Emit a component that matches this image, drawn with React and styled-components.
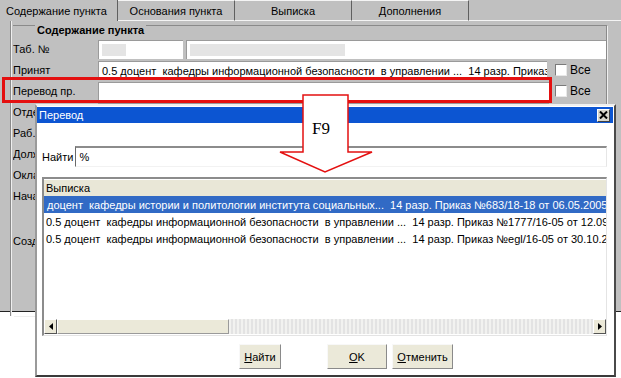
import styled, { createGlobalStyle } from "styled-components";

const GlobalStyle = createGlobalStyle`
  body {
    margin: 0;
    background: #fff;
    font-family: "Liberation Sans", Arial, sans-serif;
    font-size: 11px;
    color: #000;
  }
`;

const Screen = styled.div`
  position: relative;
  width: 621px;
  height: 378px;
  overflow: hidden;
  background: #fff;
`;

const MainWindow = styled.div`
  height: 311px;
  background: #c0c0c0;
  border-bottom: 1px solid #222;
  display: flex;
  flex-direction: column;
`;

const TabBar = styled.div`
  display: flex;
  height: 21px;
  flex-shrink: 0;
`;

const Tab = styled.div`
  width: ${(p) => (p.$active ? "118px" : "117px")};
  height: 21px;
  box-sizing: border-box;
  display: flex;
  align-items: center;
  justify-content: ${(p) => (p.$active ? "flex-start" : "center")};
  padding-left: ${(p) => (p.$active ? "6px" : "0")};
  border-top: ${(p) => (p.$active ? "none" : "1px solid #f4f4f4")};
  border-right: 1px solid #606060;
  border-bottom: ${(p) => (p.$active ? "none" : "1px solid #f4f4f4")};
  white-space: nowrap;
`;

const TabRest = styled.div`
  flex: 1;
  border-bottom: 1px solid #f4f4f4;
`;

const Panel = styled.div`
  flex: 1;
  margin-left: 10px;
  border-left: 1px solid #8a8a8a;
  box-shadow: inset 1px 0 0 #efefef;
  padding: 4px 14px 0 2px;
`;

const GroupBox = styled.div`
  border-top: 1px solid #8a8a8a;
  border-right: 1px solid #8a8a8a;
  box-shadow: 1px 1px 0 #efefef;
  height: 290px;
`;

const GroupTitle = styled.div`
  margin: -2px 0 0 22px;
  padding: 0 2px;
  width: max-content;
  background: #c0c0c0;
  font-weight: bold;
  line-height: 13px;
`;

const FieldList = styled.div`
  display: flex;
  flex-direction: column;
  gap: 1px;
  margin-top: 2px;
`;

const Row = styled.div`
  display: flex;
  align-items: center;
  height: ${(p) => p.$h || 20}px;
  margin-top: ${(p) => p.$gap || 0}px;
`;

const Label = styled.div`
  width: 85px;
  flex-shrink: 0;
  white-space: nowrap;
  overflow: hidden;
`;

const Field = styled.div`
  width: ${(p) => p.$w}px;
  height: 19px;
  box-sizing: border-box;
  margin-left: ${(p) => p.$ml || 0}px;
  background: #fff;
  border-top: 1px solid #9a9a9a;
  border-left: 1px solid #9a9a9a;
  display: flex;
  align-items: center;
  padding-left: 3px;
  white-space: pre;
  overflow: hidden;
`;

const Blur = styled.div`
  width: ${(p) => p.$w}px;
  height: 12px;
  background: #e4e4e4;
`;

const Check = styled.div`
  width: 12px;
  height: 12px;
  margin-left: ${(p) => p.$ml || 8}px;
  box-sizing: border-box;
  background: #fff;
  border-top: 1px solid #7a7a7a;
  border-left: 1px solid #7a7a7a;
  border-right: 1px solid #e8e8e8;
  border-bottom: 1px solid #e8e8e8;
`;

const CheckText = styled.span`
  margin-left: 3px;
  font-size: 12px;
`;

const Highlight = styled.div`
  position: absolute;
  left: 2px;
  top: 77px;
  width: 550px;
  height: 26px;
  box-sizing: border-box;
  border: 3px solid #e41010;
`;

const Dialog = styled.div`
  position: absolute;
  left: 35px;
  top: 104px;
  width: 581px;
  height: 273px;
  box-sizing: border-box;
  background: #fff;
  border-top: 2px solid #f0f0f0;
  border-left: 2px solid #9a9a9a;
  border-right: 2px solid #4a4a4a;
  border-bottom: 2px solid #3a3a3a;
  display: flex;
  flex-direction: column;
`;

const TitleBar = styled.div`
  height: 16px;
  margin: 1px 1px 0 0;
  background: #0c55d2;
  color: #fff;
  display: flex;
  align-items: center;
  justify-content: space-between;
  padding-left: 2px;
`;

const CloseButton = styled.div`
  width: 13px;
  height: 13px;
  margin-right: 3px;
  box-sizing: border-box;
  background: #d8d6cc;
  border: 1px solid;
  border-color: #fff #404040 #404040 #fff;
  display: flex;
  align-items: center;
  justify-content: center;
`;

const SearchRow = styled.div`
  display: flex;
  align-items: center;
  margin: 23px 0 0 5px;
  height: 21px;
`;

const SearchInput = styled.div`
  width: 532px;
  height: 21px;
  box-sizing: border-box;
  margin-left: 2px;
  border-top: 2px solid #8c8c8c;
  border-left: 1px solid #6a6a6a;
  border-right: 1px solid #e6e6e6;
  border-bottom: 1px solid #f2f2f2;
  display: flex;
  align-items: center;
  padding-left: 3px;
`;

const ListBox = styled.div`
  margin: 10px 0 0 5px;
  width: 565px;
  height: 159px;
  box-sizing: border-box;
  border-top: 2px solid #8c8c8c;
  border-left: 2px solid #8c8c8c;
  border-right: 1px solid #e4e4e4;
  border-bottom: 1px solid #e4e4e4;
  display: flex;
  flex-direction: column;
  overflow: hidden;
`;

const ListHeader = styled.div`
  height: 16px;
  margin-top: 1px;
  background: #e9e7d7;
  padding-left: 2px;
  display: flex;
  align-items: center;
`;

const ListRows = styled.div`
  flex: 1;
`;

const ListRow = styled.div`
  height: 17px;
  display: flex;
  align-items: center;
  padding-left: ${(p) => (p.$selected ? 3 : 2)}px;
  background: ${(p) => (p.$selected ? "#316ac5" : "transparent")};
  color: ${(p) => (p.$selected ? "#fff" : "#000")};
  white-space: pre;
  overflow: hidden;
`;

const ScrollBar = styled.div`
  height: 15px;
  display: flex;
  align-items: stretch;
  margin-bottom: 1px;
`;

const ScrollButton = styled.div`
  width: 13px;
  box-sizing: border-box;
  background: #ece9d8;
  border: 1px solid;
  border-color: #fff #555 #555 #fff;
  display: flex;
  align-items: center;
  justify-content: center;
`;

const ScrollThumb = styled.div`
  width: 172px;
  box-sizing: border-box;
  background: #ebe9d9;
  border: 1px solid;
  border-color: #fff #9a9a9a #9a9a9a #fff;
`;

const ScrollTrack = styled.div`
  flex: 1;
  background: repeating-linear-gradient(90deg, #f2f2f0 0 2px, #e3e3e3 2px 4px);
`;

const ButtonRow = styled.div`
  display: flex;
  margin: 8px 0 0 202px;
`;

const Button = styled.div`
  width: ${(p) => p.$w}px;
  height: 25px;
  margin-left: ${(p) => p.$ml || 0}px;
  box-sizing: border-box;
  background: #ebe9d9;
  border: 1px solid;
  border-color: #f8f8f8 #8a8a8a #8a8a8a #f8f8f8;
  display: flex;
  align-items: center;
  justify-content: center;
  u {
    text-decoration: underline;
  }
`;

const Overlay = styled.svg`
  position: absolute;
  left: 0;
  top: 0;
  pointer-events: none;
`;

const lowerLabels = ["Отдел", "Раб. место", "Должность", "Оклад", "Начало"];

export default function App() {
  return (
    <>
      <GlobalStyle />
      <Screen>
        <MainWindow>
          <TabBar>
            <Tab $active>Содержание пункта</Tab>
            <Tab>Основания пункта</Tab>
            <Tab>Выписка</Tab>
            <Tab>Дополнения</Tab>
            <TabRest />
          </TabBar>
          <Panel>
            <GroupBox>
              <GroupTitle>Содержание пункта</GroupTitle>
              <FieldList>
                <Row>
                  <Label>Таб. №</Label>
                  <Field $w={85}>
                    <Blur $w={24} />
                  </Field>
                  <Field $w={420} $ml={3}>
                    <Blur $w={155} />
                  </Field>
                </Row>
                <Row>
                  <Label>Принят</Label>
                  <Field $w={449}>
                    0.5 доцент  кафедры информационной безопасности  в управлении ...  14 разр. Приказ №1777/16-05 от 12.09.2005
                  </Field>
                  <Check />
                  <CheckText>Все</CheckText>
                </Row>
                <Row>
                  <Label>Перевод пр.</Label>
                  <Field $w={451} />
                  <Check $ml={6} />
                  <CheckText>Все</CheckText>
                </Row>
                {lowerLabels.map((l) => (
                  <Row key={l}>
                    <Label>{l}</Label>
                    <Field $w={451} />
                  </Row>
                ))}
                <Row $gap={24}>
                  <Label>Создан</Label>
                  <Field $w={451} />
                </Row>
              </FieldList>
            </GroupBox>
          </Panel>
        </MainWindow>

        <Highlight />

        <Dialog>
          <TitleBar>
            <span>Перевод</span>
            <CloseButton>
              <svg width="9" height="8" viewBox="0 0 9 8">
                <path d="M1 0.5 L8 7.5 M8 0.5 L1 7.5" stroke="#000" strokeWidth="2" />
              </svg>
            </CloseButton>
          </TitleBar>
          <SearchRow>
            <span>Найти</span>
            <SearchInput>%</SearchInput>
          </SearchRow>
          <ListBox>
            <ListHeader>Выписка</ListHeader>
            <ListRows>
              <ListRow $selected>
                доцент  кафедры истории и политологии института социальных...  14 разр. Приказ №683/18-18 от 06.05.2005
              </ListRow>
              <ListRow>
                0.5 доцент  кафедры информационной безопасности  в управлении ...  14 разр. Приказ №1777/16-05 от 12.09.2005
              </ListRow>
              <ListRow>
                0.5 доцент  кафедры информационной безопасности  в управлении ...  14 разр. Приказ №egl/16-05 от 30.10.2005
              </ListRow>
            </ListRows>
            <ScrollBar>
              <ScrollButton>
                <svg width="4" height="7" viewBox="0 0 4 7">
                  <path d="M4 0 L0 3.5 L4 7 Z" fill="#000" />
                </svg>
              </ScrollButton>
              <ScrollThumb />
              <ScrollTrack />
              <ScrollButton>
                <svg width="4" height="7" viewBox="0 0 4 7">
                  <path d="M0 0 L4 3.5 L0 7 Z" fill="#000" />
                </svg>
              </ScrollButton>
            </ScrollBar>
          </ListBox>
          <ButtonRow>
            <Button $w={42}>
              <span><u>Н</u>айти</span>
            </Button>
            <Button $w={60} $ml={46}>
              <span><u>O</u>K</span>
            </Button>
            <Button $w={61} $ml={5}>
              <span><u>О</u>тменить</span>
            </Button>
          </ButtonRow>
        </Dialog>

        <Overlay width="621" height="378" viewBox="0 0 621 378">
          <polygon
            points="303,95 348,95 348,152 372,152 325,172 280,152 303,152"
            fill="#fff"
            stroke="#e41010"
            strokeWidth="1.5"
          />
          <text x="312" y="134" fontFamily="'Liberation Serif', serif" fontSize="17">
            F9
          </text>
        </Overlay>
      </Screen>
    </>
  );
}
